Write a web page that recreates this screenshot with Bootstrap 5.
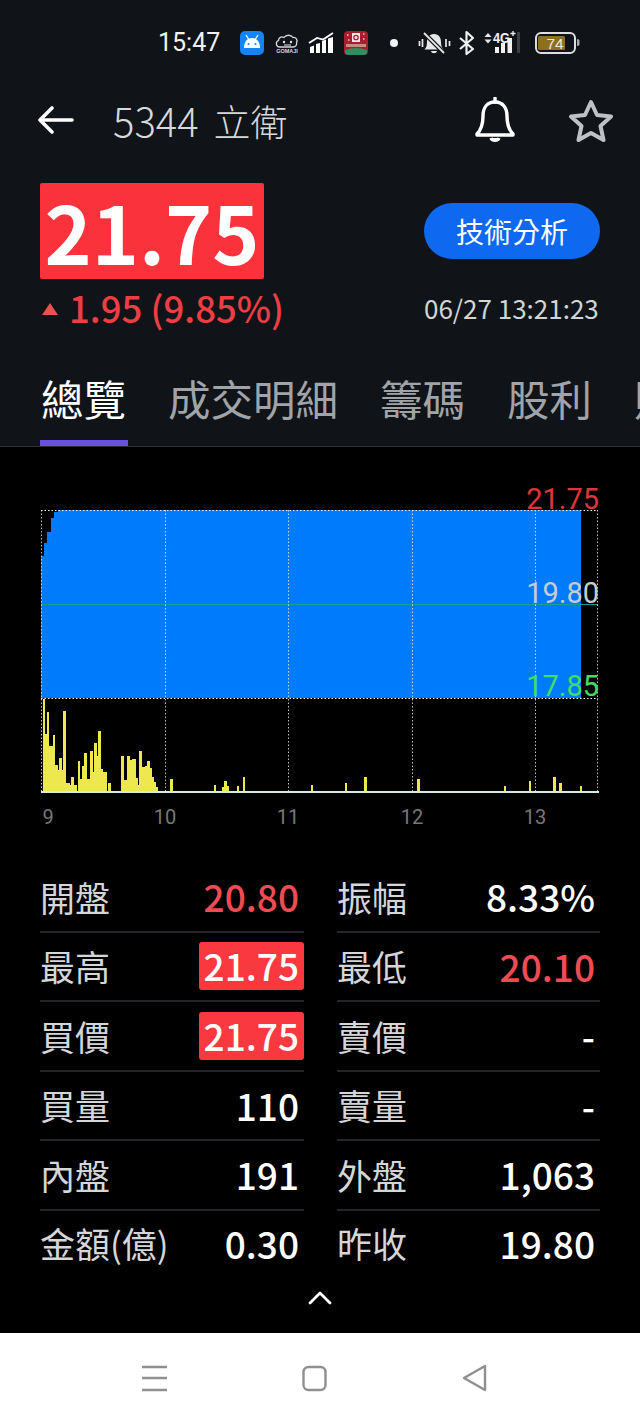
<!DOCTYPE html>
<html lang="zh-Hant">
<head>
  <meta charset="UTF-8">
  <meta name="viewport" content="width=device-width, initial-scale=1.0">
  <title>5344 立衛</title>
  <link href="https://cdn.jsdelivr.net/npm/bootstrap@5.3.3/dist/css/bootstrap.min.css" rel="stylesheet">
  <style>
    html, body {
      background: #000;
    }
    body {
      width: 640px;
      height: 1422px;
      overflow: hidden;
      font-family: "Noto Sans CJK TC", "Noto Sans", sans-serif;
    }
    .top-panel {
      height: 447px;
      background: #101317;
      border-bottom: 1px solid #2a2c30;
    }
    .status-bar {
      height: 85px;
      padding-left: 158px;
      color: #f2f2f2;
    }
    .status-time {
      font-family: Roboto, sans-serif;
      font-size: 25px;
      width: 82px;
    }
    .status-tray text {
      font-family: "Liberation Sans", sans-serif;
    }
    .title-bar {
      height: 70px;
      padding: 0 26px 0 38px;
      color: #fff;
    }
    .stock-name {
      font-size: 37px;
      font-weight: 300;
      line-height: 1;
      color: #d6d8da;
      margin-left: 39px;
    }
    .stock-code {
      font-size: 40px;
      margin-right: 15px;
    }
    .bell-icon {
      margin-right: 52px;
    }
    .quote-block {
      padding: 28px 40px 0;
    }
    .price-box {
      width: 224px;
      height: 96px;
      line-height: 94px;
      font-size: 80px;
      font-weight: 700;
      text-align: center;
      color: #fff;
      background: #fa323c;
      border-radius: 2px;
    }
    .change-row {
      height: 62px;
      padding-bottom: 4px;
      font-size: 36.500px;
      font-weight: 500;
      color: #ee3e44;
    }
    .up-mark {
      width: 0;
      height: 0;
      margin: 2px 11px 0 2px;
      border-left: 8px solid transparent;
      border-right: 8px solid transparent;
      border-bottom: 12px solid #ee5050;
    }
    .quote-side {
      width: 176px;
      padding-top: 20px;
    }
    .analysis-btn {
      width: 176px;
      height: 56px;
      padding: 0;
      font-size: 28px;
      color: #fff;
      background: #0f68f0;
      border: 0;
      border-radius: 28px;
    }
    .quote-time {
      margin-top: 29px;
      font-size: 26px;
      white-space: nowrap;
      color: #d2d4d6;
    }
    .tab-strip {
      height: 105px;
      padding-left: 40px;
      gap: 39px;
      overflow: hidden;
      white-space: nowrap;
    }
    .tab-item {
      height: 105px;
      padding: 24px 2px 0 1px;
      font-size: 42.500px;
      line-height: 66px;
      color: #a0a4a8;
    }
    .tab-item.is-active {
      color: #fff;
      border-bottom: 6px solid #6a50e0;
    }
    .chart-wrap {
      height: 386px;
    }
    .chart-wrap svg {
      display: block;
    }
    .axis-tag {
      position: absolute;
      font-family: Roboto, sans-serif;
      line-height: 1;
      transform: translateX(-50%);
    }
    .price-tag {
      font-size: 29px;
      transform: none;
      right: 41px;
    }
    .time-tag {
      top: 360px;
      font-size: 20px;
      color: #777;
    }
    .stats-grid {
      display: grid;
      grid-template-columns: 264px 263px;
      column-gap: 33px;
      padding-left: 40px;
      margin-top: 30px;
    }
    .stat-cell {
      height: 69.500px;
      padding-right: 5px;
      border-bottom: 2px solid #222427;
    }
    .stat-cell.is-last {
      border-bottom: 0;
      padding-bottom: 4px;
    }
    .stat-name {
      font-size: 35px;
      color: #d4d6d8;
    }
    .stat-value {
      font-size: 37px;
      font-weight: 500;
      color: #fff;
    }
    .stat-value.is-up {
      color: #ee4c52;
    }
    .stat-value.is-limit {
      margin-right: -5px;
      padding: 0 5px;
      height: 48px;
      line-height: 47px;
      color: #fff;
      background: #fa3840;
      border-radius: 3px;
    }
    .collapse-row {
      height: 49px;
      margin-top: 4px;
      padding-bottom: 22px;
    }
    .nav-strip {
      height: 89px;
      background: #fff;
    }
  </style>
</head>
<body>

<div class="top-panel">
  <div class="status-bar d-flex align-items-center">
    <span class="status-time">15:47</span>
    <svg class="status-tray" width="345" height="46" viewBox="240 20 345 46">
      <!-- android tile -->
      <rect x="240" y="31" width="24" height="24" rx="5" fill="#1584f4"/>
      <path d="M244 48c0-6 3-10 8-10s8 4 8 10Z" fill="#fff"/>
      <circle cx="248.500" cy="44" r="1.100" fill="#1584f4"/>
      <circle cx="255.500" cy="44" r="1.100" fill="#1584f4"/>
      <path d="m246 35 2.500 4M258 35l-2.500 4" stroke="#fff" stroke-width="1.200"/>
      <!-- gomaji cloud -->
      <path d="M280 47c-4 0-5-5-1.500-6.500 0-3 3-4.500 5.500-3 2-3 7-3 9 0 3-.5 5 2.500 3.500 5 1 2.500-1 4.500-3.500 4.500Z" fill="none" stroke="#d8d8d8" stroke-width="1.300"/>
      <circle cx="284" cy="42" r="1.200" fill="#e8e8e8"/>
      <circle cx="291" cy="42" r="1.200" fill="#e8e8e8"/>
      <path d="M284 45h7" stroke="#e8e8e8"/>
      <text x="287" y="53" font-size="5.500" font-weight="700" text-anchor="middle" fill="#d8d8d8">GOMAJI</text>
      <!-- trend bars -->
      <path d="M310 47v6h4v-7.500ZM316 44v9h4v-10ZM322 41v12h4V39.500ZM328 38.500V53h5V37Z" fill="#fff"/>
      <path d="m309 43 8-5 6 1.500 10-6.500" fill="none" stroke="#fff" stroke-width="1.800"/>
      <!-- red tile -->
      <rect x="344" y="31" width="24" height="24" rx="4" fill="#a81e2e"/>
      <rect x="352" y="33" width="8" height="9" fill="#f4e8e8"/>
      <circle cx="356" cy="37.500" r="2.200" fill="none" stroke="#b02030" stroke-width="1.300"/>
      <path d="M346 44h20v3h-20Z" fill="#c98a84"/>
      <path d="M347 35h1.500M363 34h1.500M348 40h1.500M363 39h1.500" stroke="#eec8c8" stroke-width="1.500"/>
      <path d="M345 50q11-4 22 0v2q0 3-3 3h-16q-3 0-3-3Z" fill="#2f8f62"/>
      <!-- dot -->
      <circle cx="394" cy="43" r="4" fill="#f4f4f4"/>
      <!-- muted bell -->
      <path d="M434 34c-5 0-7 4-7 8 0 4-1 6-2.500 7.500h19c-1.500-1.500-2.500-3.500-2.500-7.500 0-4-2-8-7-8Z" fill="#e8e8e8"/>
      <path d="M431 51c.5 3 5.500 3 6 0Z" fill="#e8e8e8"/>
      <path d="m425 34 19 19" stroke="#101317" stroke-width="4.500"/>
      <path d="m424 33 20 20" stroke="#e8e8e8" stroke-width="1.800"/>
      <path d="M419.500 41v5M446 39v8M449.500 41v5M422.500 39v8" stroke="#e8e8e8" stroke-width="1.700"/>
      <!-- bluetooth -->
      <path d="m460 38 13 11-6.500 5V32l6.500 6-13 11" fill="none" stroke="#f0f0f0" stroke-width="2.200" stroke-linejoin="round"/>
      <!-- network -->
      <path d="m484.500 37 3.500-4 3.500 4ZM484.500 39.500l3.500 4 3.500-4Z" fill="#e8e8e8"/>
      <text x="493" y="43" font-size="15" font-weight="700" fill="#f0f0f0" textLength="17" lengthAdjust="spacingAndGlyphs">4G</text>
      <path d="M510.500 33.500h5M513 31v5" stroke="#f0f0f0" stroke-width="1.300"/>
      <path d="M495 47h4v6h-4ZM501 43h4v10h-4ZM507.500 38h4.500v15h-4.500Z" fill="#f0f0f0"/>
      <path d="M517 32h3v21h-3Z" fill="#3c3f42"/>
      <!-- battery -->
      <rect x="536" y="33" width="39" height="20" rx="5" fill="none" stroke="#dedede" stroke-width="2"/>
      <rect x="538" y="36" width="27" height="14" rx="1.500" fill="#8e6f20"/>
      <path d="M577 39c2 0 2.500 1 2.500 2v3c0 1-.5 2-2.500 2Z" fill="#a8a8a8"/>
      <text x="555" y="49" font-size="15.500" text-anchor="middle" fill="#f0ead8">74</text>
    </svg>
  </div>

  <div class="title-bar d-flex align-items-center">
    <svg width="36" height="30" viewBox="0 0 36 30" fill="none" stroke="#fff" stroke-width="3.600" stroke-linecap="round" stroke-linejoin="round"><path d="M34 15H3M14 3 2 15l12 12"/></svg>
    <span class="stock-name flex-grow-1"><span class="stock-code">5344</span>立衛</span>
    <svg class="bell-icon" width="42" height="46" viewBox="0 0 42 46" fill="none" stroke="#fff" stroke-width="3.400" stroke-linejoin="round"><path d="M21 5c-8 0-12 6-12 14 0 9-2 14-6 18v1h36v-1c-4-4-6-9-6-18 0-8-4-14-12-14Z"/><path d="M21 1v4" stroke-linecap="round"/><path d="M17 41c1 3 7 3 8 0" fill="#fff"/></svg>
    <svg width="46" height="44" viewBox="0 0 46 44" fill="none" stroke="#bfc1c4" stroke-width="4" stroke-linejoin="round"><path d="m23 4 6 13 14 1.500-10.500 9.500 3 14L23 35 10.500 42l3-14L3 18.500 17 17Z"/></svg>
  </div>

  <div class="quote-block d-flex justify-content-between">
    <div>
      <div class="price-box">21.75</div>
      <div class="change-row d-flex align-items-center"><span class="up-mark"></span>1.95 (9.85%)</div>
    </div>
    <div class="quote-side">
      <button type="button" class="btn analysis-btn">技術分析</button>
      <div class="quote-time">06/27 13:21:23</div>
    </div>
  </div>

  <div class="tab-strip d-flex">
    <div class="tab-item is-active">總覽</div>
    <div class="tab-item">成交明細</div>
    <div class="tab-item">籌碼</div>
    <div class="tab-item">股利</div>
    <div class="tab-item">財務</div>
  </div>
</div>

<div class="chart-wrap position-relative">
  <svg id="chart" width="640" height="386" viewBox="0 447 640 386"></svg>
  <span class="axis-tag price-tag" style="top: 38px; color: #e0343a">21.75</span>
  <span class="axis-tag price-tag" style="top: 132px; color: #c8ccd0">19.80</span>
  <span class="axis-tag price-tag" style="top: 225px; color: #3fe060">17.85</span>
  <span class="axis-tag time-tag" style="left: 48px">9</span>
  <span class="axis-tag time-tag" style="left: 165px">10</span>
  <span class="axis-tag time-tag" style="left: 288px">11</span>
  <span class="axis-tag time-tag" style="left: 412px">12</span>
  <span class="axis-tag time-tag" style="left: 535px">13</span>
</div>

<div class="stats-grid" id="statsGrid"></div>

<div class="collapse-row d-flex align-items-center justify-content-center">
  <svg width="24" height="14" viewBox="0 0 24 14" fill="none" stroke="#fff" stroke-width="2.800" stroke-linecap="round" stroke-linejoin="round"><path d="M2 12 12 2l10 10"/></svg>
</div>

<div class="nav-strip d-flex align-items-center position-relative">
  <svg width="640" height="89" viewBox="0 1333 640 89" fill="none" stroke="#8f8f8f" stroke-width="2.400" stroke-linejoin="round">
    <path d="M142 1367h25M142 1378h25M142 1390h25"/>
    <rect x="303.500" y="1367" width="22" height="23" rx="5"/>
    <path d="M485 1366v24l-21-12Z"/>
  </svg>
</div>

<script>
  const stats = [
    ['開盤', '20.80', 'is-up', '振幅', '8.33%', ''],
    ['最高', '21.75', 'is-limit', '最低', '20.10', 'is-up'],
    ['買價', '21.75', 'is-limit', '賣價', '-', ''],
    ['買量', '110', '', '賣量', '-', ''],
    ['內盤', '191', '', '外盤', '1,063', ''],
    ['金額(億)', '0.30', '', '昨收', '19.80', '']
  ];
  const statCell = (name, value, cls, last) => `
    <div class="stat-cell d-flex justify-content-between align-items-center ${last ? 'is-last' : ''}">
      <span class="stat-name">${name}</span>
      <span class="stat-value ${cls}">${value}</span>
    </div>`;
  document.getElementById('statsGrid').innerHTML = stats.map((s, i) =>
    statCell(s[0], s[1], s[2], i === 5) + statCell(s[3], s[4], s[5], i === 5)
  ).join('');

  // volume bars: left and right edge in page pixels, height
  const bars = [[43,45,93],[45,47,58],[47,49,80],[49,53,46],[53,55,57],[55,58,27],[58,59,22],[59,62,34],[62,63,22],[63,66,81],[66,70,9],[70,71,7],[71,74,15],[74,77,7],
    [78,80,31],[80,82,13],[82,84,26],[84,87,39],[87,90,13],[90,93,41],[93,94,20],[94,97,49],[97,98,36],[98,101,61],[101,103,23],[103,107,20],[108,111,9],
    [121,124,36],[124,127,12],[127,130,36],[130,132,32],[132,136,33],[136,138,14],[138,139,7],[139,142,41],[142,145,25],[145,147,26],[147,150,31],[150,152,24],[152,154,15],[154,156,10],[156,158,5],
    [170,173,13],[214,216,7],[222,224,5],[224,227,11],[227,229,6],[237,239,6],[243,245,15],[311,313,7],[345,347,9],[364,367,15],[417,420,13],[504,506,6],[529,531,11],[553,556,15],[559,562,9],[580,582,6]];
  const gridX = [41, 165, 288, 412, 535, 597];
  let svg = '<rect x="41" y="510" width="540" height="188" fill="#007bfb"/>';
  // black notch where the first minutes stay below the limit price
  svg += '<path d="M41 510v46h3v-13h3v-11h4v-14h3v-6h4v-2Z" fill="#000"/>';
  svg += '<path d="M129 510v-2h3v-1h3v1h3v-1h2v2h3v-1h2v2Z" fill="#000"/>';
  bars.forEach(b => { svg += `<rect x="${b[0]}" y="${792 - b[2]}" width="${b[1] - b[0]}" height="${b[2]}" fill="#ece84e" shape-rendering="crispEdges"/>`; });
  svg += '<path d="M41 604.500H598" stroke="#1aa09a" stroke-width="1"/>';
  gridX.forEach(x => { svg += `<path d="M${x + 0.5} 510V792" stroke="#e8eef2" stroke-opacity="0.800" stroke-dasharray="1.500 2"/>`; });
  [510.5, 698.5].forEach(y => { svg += `<path d="M41 ${y}H598" stroke="#e8eef2" stroke-dasharray="1.500 2"/>`; });
  svg += '<path d="M41 792H599" stroke="#cfeee8" stroke-width="2"/>';
  document.getElementById('chart').innerHTML = svg;
</script>
<script src="https://cdn.jsdelivr.net/npm/bootstrap@5.3.3/dist/js/bootstrap.bundle.min.js"></script>
</body>
</html>
